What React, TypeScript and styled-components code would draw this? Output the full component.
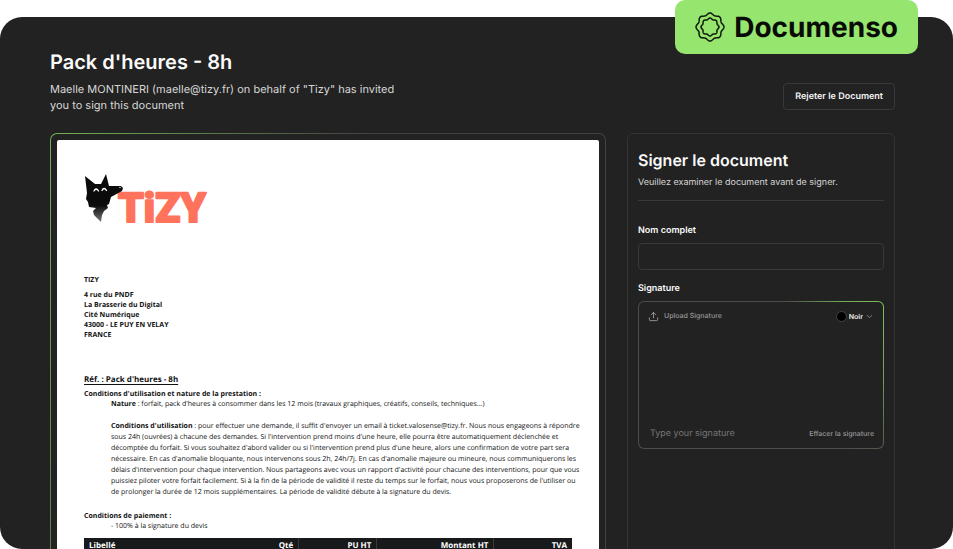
import React from "react";
import styled, { createGlobalStyle } from "styled-components";
import { ChevronDown, Upload } from "lucide-react";

const GlobalStyle = createGlobalStyle`
  * { box-sizing: border-box; }
  body {
    margin: 0;
    background: #fff;
    font-family: Inter, "Liberation Sans", sans-serif;
    text-rendering: geometricPrecision;
  }
  h1, h2, h3, p { margin: 0; }
  button, input, select { font-family: inherit; text-rendering: inherit; }
`;

const Page = styled.div`
  position: relative;
  height: 100vh;
  padding-top: 17px;
  overflow: hidden;
`;

const Shell = styled.main`
  height: 100%;
  padding: 33px 58px 0 50px;
  border-radius: 22px;
  overflow: hidden;
  background: #222;
  color: #fafafa;
`;

const Brand = styled.div`
  position: absolute;
  top: 0;
  right: 35px;
  display: flex;
  align-items: center;
  gap: 9px;
  height: 54px;
  padding: 0 20px;
  border-radius: 10px;
  background: #95e56f;
  color: #080b06;
  font-size: 28px;
  font-weight: 700;
`;

const Header = styled.header`
  display: flex;
  justify-content: space-between;
  align-items: flex-end;
  margin-bottom: 20px;
`;

const Title = styled.h1`
  font-size: 20px;
  line-height: 24px;
  font-weight: 600;
`;

const Intro = styled.p`
  max-width: 350px;
  margin-top: 7px;
  color: #d6d6d6;
  font-size: 11px;
  line-height: 16px;
`;

const RejectButton = styled.button`
  height: 27px;
  margin-bottom: 3px;
  padding: 0 11px;
  border: 1px solid #393939;
  border-radius: 4px;
  background: transparent;
  color: #f4f4f4;
  font-size: 9px;
  font-weight: 600;
`;

const Columns = styled.div`
  display: grid;
  grid-template-columns: minmax(0, 556fr) minmax(0, 268fr);
  gap: 21px;
`;

const DocumentFrame = styled.section`
  padding: 6px;
  border: 1px solid transparent;
  border-radius: 7px;
  background:
    linear-gradient(#222, #222) padding-box,
    radial-gradient(ellipse 320px 900px at 0 0, #72b252, #424242) border-box;
`;

const Sheet = styled.article`
  min-height: 760px;
  padding: 33px 27px;
  border-radius: 2px;
  background: #fff;
  color: #111;
  font-family: "Open Sans", "Noto Sans", sans-serif;
  font-size: 7px;
  line-height: 11px;
`;

const TizyLogo = styled.svg`
  display: block;
  width: 126px;
  height: 52px;
  overflow: visible;
`;

const Company = styled.h2`
  margin-top: 50px;
  font-size: 7px;
  line-height: 12px;
`;

const Address = styled.address`
  margin-top: 4px;
  font-style: normal;
  font-weight: 700;
  line-height: 10px;
`;

const Reference = styled.h2`
  margin-top: 33px;
  font-size: 8px;
  line-height: 12px;
  text-decoration: underline;
  text-underline-offset: 2px;
`;

const Terms = styled.section<{ $gap: number }>`
  margin-top: ${(p) => p.$gap}px;
`;

const TermsTitle = styled.h3`
  font-size: 7px;
  line-height: 10px;
`;

const Clause = styled.p<{ $spaced?: boolean }>`
  margin-top: ${(p) => (p.$spaced ? 11 : 0)}px;
  padding-left: 27px;
  line-height: ${(p) => (p.$spaced ? 11 : 10)}px;
  white-space: nowrap;
`;

const Items = styled.table`
  width: 100%;
  margin-top: 6px;
  border-collapse: collapse;
  background: #17191a;
  color: #fff;
  font-size: 8px;
  line-height: 16px;
`;

const HeadCell = styled.th<{ $width: number }>`
  width: ${(p) => p.$width}%;
  padding: 0 5px;
  text-align: right;
  &:first-child { text-align: left; }
  & + & + & { border-left: 1px solid #3a3a3a; }
`;

const SignPanel = styled.form`
  padding: 16px 10px;
  border: 1px solid #343434;
  border-radius: 6px;
`;

const PanelTitle = styled.h2`
  font-size: 16px;
  line-height: 20px;
  font-weight: 600;
`;

const PanelText = styled.p`
  margin-top: 6px;
  padding-bottom: 10px;
  border-bottom: 1px solid #393939;
  color: #d6d6d6;
  font-size: 9px;
  line-height: 14px;
`;

const FieldLabel = styled.label<{ $gap: number }>`
  display: block;
  margin-top: ${(p) => p.$gap}px;
  font-size: 9px;
  line-height: 14px;
  font-weight: 600;
`;

const NameInput = styled.input`
  display: block;
  width: 100%;
  height: 27px;
  margin-top: 5px;
  padding: 0 8px;
  border: 1px solid #393939;
  border-radius: 4px;
  background: transparent;
  color: #fff;
  font-size: 10px;
`;

const SignatureBox = styled.div`
  display: flex;
  flex-direction: column;
  justify-content: space-between;
  height: 148px;
  margin-top: 5px;
  padding: 7px 9px;
  border: 1px solid transparent;
  border-radius: 6px;
  background:
    linear-gradient(#222, #222) padding-box,
    radial-gradient(ellipse 100px 160px at 100% 0, #7cc259, #70a656 45%, #4c4c4c) border-box;
`;

const BoxRow = styled.div`
  display: flex;
  align-items: center;
  justify-content: space-between;
`;

const QuietButton = styled.button`
  display: flex;
  align-items: center;
  gap: 5px;
  padding: 0;
  border: 0;
  background: transparent;
  color: #9a9a9a;
  font-size: 7px;
  line-height: 14px;
  font-weight: 500;
`;

const ColorPicker = styled.label`
  display: flex;
  align-items: center;
  gap: 2px;
  color: #9a9a9a;
`;

const Swatch = styled.span`
  width: 11px;
  height: 11px;
  border: 1px solid #454545;
  border-radius: 50%;
  background: #000;
`;

const ColorSelect = styled.select`
  appearance: none;
  field-sizing: content;
  padding: 0;
  border: 0;
  background: transparent;
  color: #eee;
  font-size: 7px;
  font-weight: 600;
`;

const SignatureInput = styled.input`
  width: 120px;
  padding: 0 2px;
  border: 0;
  background: transparent;
  color: #fff;
  font-size: 9px;
  line-height: 14px;
  &::placeholder { color: #777; opacity: 1; }
`;

function scallop(radius: number, depth: number) {
  const points: string[] = [];
  for (let i = 0; i < 160; i++) {
    const a = (i / 160) * Math.PI * 2;
    const r = radius + depth * Math.cos(8 * a);
    points.push(`${(16 + r * Math.sin(a)).toFixed(2)} ${(16 - r * Math.cos(a)).toFixed(2)}`);
  }
  return `M${points.join("L")}Z`;
}

function BrandMark() {
  return (
    <svg width="30" height="30" viewBox="0 0 32 32" fill="none" stroke="#101a0a" strokeWidth="1.6" strokeLinejoin="round" aria-hidden="true">
      <path d={scallop(13.9, 1)} />
      <path d={scallop(8.9, 0.7)} />
    </svg>
  );
}

function Logo() {
  return (
    <TizyLogo viewBox="0 0 126 52" role="img" aria-label="Tizy">
      <defs>
        <linearGradient id="tail" x1="0" y1="0" x2="0" y2="1">
          <stop offset="0.65" stopColor="#0b0b0c" />
          <stop offset="1" stopColor="#77777a" />
        </linearGradient>
      </defs>
      <text x="34" y="49" fill="#ff735d" stroke="#ff735d" strokeWidth="2" strokeLinejoin="round" fontFamily="Roboto, sans-serif" fontWeight="900" fontSize="41">
        TiZY
      </text>
      <path
        fill="url(#tail)"
        d="M1 3 L11 11 L17 11 L22 1 L25 13 L37 13 L39 15 L38 18 L27 24 L25 31 L23 32 L24 35 L20 38 L18 42 L17 49 L10 42 L9 38 L12 35 L5 34 L4 29 L2 26 L3 20Z"
      />
      <path fill="none" stroke="#fff" strokeWidth="1.3" strokeLinecap="round" d="M10 18q2-4 4.500 0M18 17.500q2-4 4.500 0" />
      <circle cx="36" cy="14.500" r="0.700" fill="#fff" />
    </TizyLogo>
  );
}

const columns = [
  { label: "Libellé", width: 33 },
  { label: "Qté", width: 11 },
  { label: "PU HT", width: 16 },
  { label: "Montant HT", width: 24 },
  { label: "TVA", width: 16 },
];

export default function App() {
  return (
    <>
      <GlobalStyle />
      <Page>
        <Shell>
          <Header>
            <div>
              <Title>Pack d'heures - 8h</Title>
              <Intro>
                Maelle MONTINERI (maelle@tizy.fr) on behalf of "Tizy" has invited<br />
                you to sign this document
              </Intro>
            </div>
            <RejectButton type="button">Rejeter le Document</RejectButton>
          </Header>
          <Columns>
            <DocumentFrame>
              <Sheet>
                <Logo />
                <Company>TIZY</Company>
                <Address>
                  4 rue du PNDF<br />
                  La Brasserie du Digital<br />
                  Cité Numérique<br />
                  43000 - LE PUY EN VELAY<br />
                  FRANCE
                </Address>
                <Reference>Réf. : Pack d'heures - 8h</Reference>
                <Terms $gap={4}>
                  <TermsTitle>Conditions d'utilisation et nature de la prestation :</TermsTitle>
                  <Clause>
                    <b>Nature</b> : forfait, pack d'heures à consommer dans les 12 mois (travaux graphiques, créatifs, conseils, techniques...)
                  </Clause>
                  <Clause $spaced>
                    <b>Conditions d'utilisation</b> : pour effectuer une demande, il suffit d'envoyer un email à ticket.valosense@tizy.fr. Nous nous engageons à répondre<br />
                    sous 24h (ouvrées) à chacune des demandes. Si l'intervention prend moins d'une heure, elle pourra être automatiquement déclenchée et<br />
                    décomptée du forfait. Si vous souhaitez d'abord valider ou si l'intervention prend plus d'une heure, alors une confirmation de votre part sera<br />
                    nécessaire. En cas d'anomalie bloquante, nous intervenons sous 2h, 24h/7j. En cas d'anomalie majeure ou mineure, nous communiquerons les<br />
                    délais d'intervention pour chaque intervention. Nous partageons avec vous un rapport d'activité pour chacune des interventions, pour que vous<br />
                    puissiez piloter votre forfait facilement. Si à la fin de la période de validité il reste du temps sur le forfait, nous vous proposerons de l'utiliser ou<br />
                    de prolonger la durée de 12 mois supplémentaires. La période de validité débute à la signature du devis.
                  </Clause>
                </Terms>
                <Terms $gap={14}>
                  <TermsTitle>Conditions de paiement :</TermsTitle>
                  <Clause>- 100% à la signature du devis</Clause>
                </Terms>
                <Items>
                  <thead>
                    <tr>
                      {columns.map((c) => (
                        <HeadCell key={c.label} $width={c.width} scope="col">{c.label}</HeadCell>
                      ))}
                    </tr>
                  </thead>
                </Items>
              </Sheet>
            </DocumentFrame>
            <SignPanel>
              <PanelTitle>Signer le document</PanelTitle>
              <PanelText>Veuillez examiner le document avant de signer.</PanelText>
              <FieldLabel $gap={23} htmlFor="name">Nom complet</FieldLabel>
              <NameInput id="name" type="text" />
              <FieldLabel $gap={12} htmlFor="signature">Signature</FieldLabel>
              <SignatureBox>
                <BoxRow>
                  <QuietButton type="button">
                    <Upload size={11} aria-hidden="true" />
                    Upload Signature
                  </QuietButton>
                  <ColorPicker>
                    <Swatch />
                    <ColorSelect aria-label="Couleur" defaultValue="Noir">
                      <option>Noir</option>
                    </ColorSelect>
                    <ChevronDown size={9} aria-hidden="true" />
                  </ColorPicker>
                </BoxRow>
                <BoxRow>
                  <SignatureInput id="signature" type="text" placeholder="Type your signature" />
                  <QuietButton type="button">Effacer la signature</QuietButton>
                </BoxRow>
              </SignatureBox>
            </SignPanel>
          </Columns>
        </Shell>
        <Brand>
          <BrandMark />
          Documenso
        </Brand>
      </Page>
    </>
  );
}
